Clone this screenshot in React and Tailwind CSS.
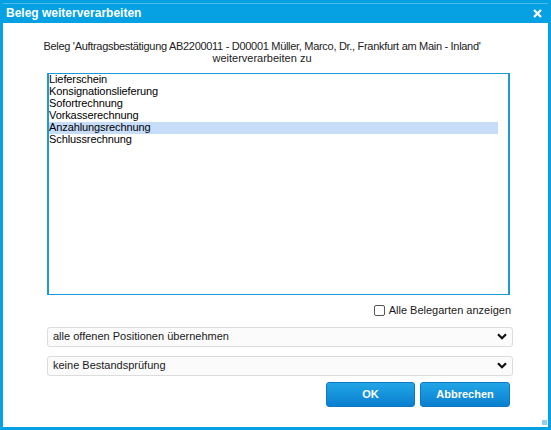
const items = [
  "Lieferschein",
  "Konsignationslieferung",
  "Sofortrechnung",
  "Vorkasserechnung",
  "Anzahlungsrechnung",
  "Schlussrechnung",
];

function Chevron() {
  return (
    <svg width="10" height="7" viewBox="0 0 10 7" className="shrink-0">
      <path d="M1 1.2 L5 5.2 L9 1.2" fill="none" stroke="#111" strokeWidth="2.2" />
    </svg>
  );
}

function FakeSelect({ label }) {
  return (
    <div className="flex items-center justify-between h-[20px] w-[466px] rounded-[3px] border border-[#dcdcdc] bg-[#fbfbfb] pl-[5px] pr-[5px] text-[11px] text-[#1a1a1a]">
      <span>{label}</span>
      <Chevron />
    </div>
  );
}

export default function App() {
  const selected = 4;

  return (
    <div
      className="w-[551px] h-[430px] bg-white border-[3px] border-[#05a1e2] flex flex-col relative"
      style={{ fontFamily: '"Liberation Sans", Arial, sans-serif' }}
    >
      <div className="h-[20px] bg-[#05a1e2] border-t border-[#49bbea] flex items-center justify-between pl-[3px] pr-[6px] pb-[1px]">
        <span className="text-white font-bold text-[12px]">Beleg weiterverarbeiten</span>
        <svg width="9" height="9" viewBox="0 0 9 9">
          <path d="M1 1 L8 8 M8 1 L1 8" stroke="#fff" strokeWidth="2.2" />
        </svg>
      </div>

      <div className="mt-[17px] w-[518px] text-center text-[11px] leading-[12px] text-[#222]">
        <div className="tracking-[-0.3px]">
          Beleg 'Auftragsbestätigung AB2200011 - D00001 Müller, Marco, Dr., Frankfurt am Main - Inland'
        </div>
        <div>weiterverarbeiten zu</div>
      </div>

      <div className="flex flex-col pl-[44px] pr-[35px]">
        <div className="mt-[9px] w-[463px] h-[222px] border-l-2 border-r-2 border-t border-b border-[#1a9ad6] pr-[10px]">
          {items.map((it, i) => (
            <div
              key={it}
              className={
                "h-[12px] leading-[11px] text-[11px] text-black tracking-[-0.1px] " +
                (i === selected ? "bg-[#c6dcf8]" : "")
              }
            >
              {it}
            </div>
          ))}
        </div>

        <div className="mt-[7px] w-[466px] flex items-center justify-end pr-[2px] gap-[4px] text-[11px] text-[#1a1a1a]">
          <span className="w-[11px] h-[11px] rounded-[2px] border border-[#555] bg-white" />
          <span>Alle Belegarten anzeigen</span>
        </div>

        <div className="mt-[8px] flex flex-col gap-[9px]">
          <FakeSelect label="alle offenen Positionen übernehmen" />
          <FakeSelect label="keine Bestandsprüfung" />
        </div>

        <div className="mt-[6px] w-[463px] flex justify-end gap-[5px]">
          <button className="w-[89px] h-[25px] rounded-[3px] bg-gradient-to-b from-[#21a6e6] to-[#0a7fd0] border border-[#0a78c4] text-white font-bold text-[11px]">
            OK
          </button>
          <button className="w-[90px] h-[25px] rounded-[3px] bg-gradient-to-b from-[#21a6e6] to-[#0a7fd0] border border-[#0a78c4] text-white font-bold text-[11px]">
            Abbrechen
          </button>
        </div>
      </div>

      <span className="absolute right-[1px] bottom-[2px] w-[5px] h-[5px] bg-[#8fd0f2]" />
    </div>
  );
}
